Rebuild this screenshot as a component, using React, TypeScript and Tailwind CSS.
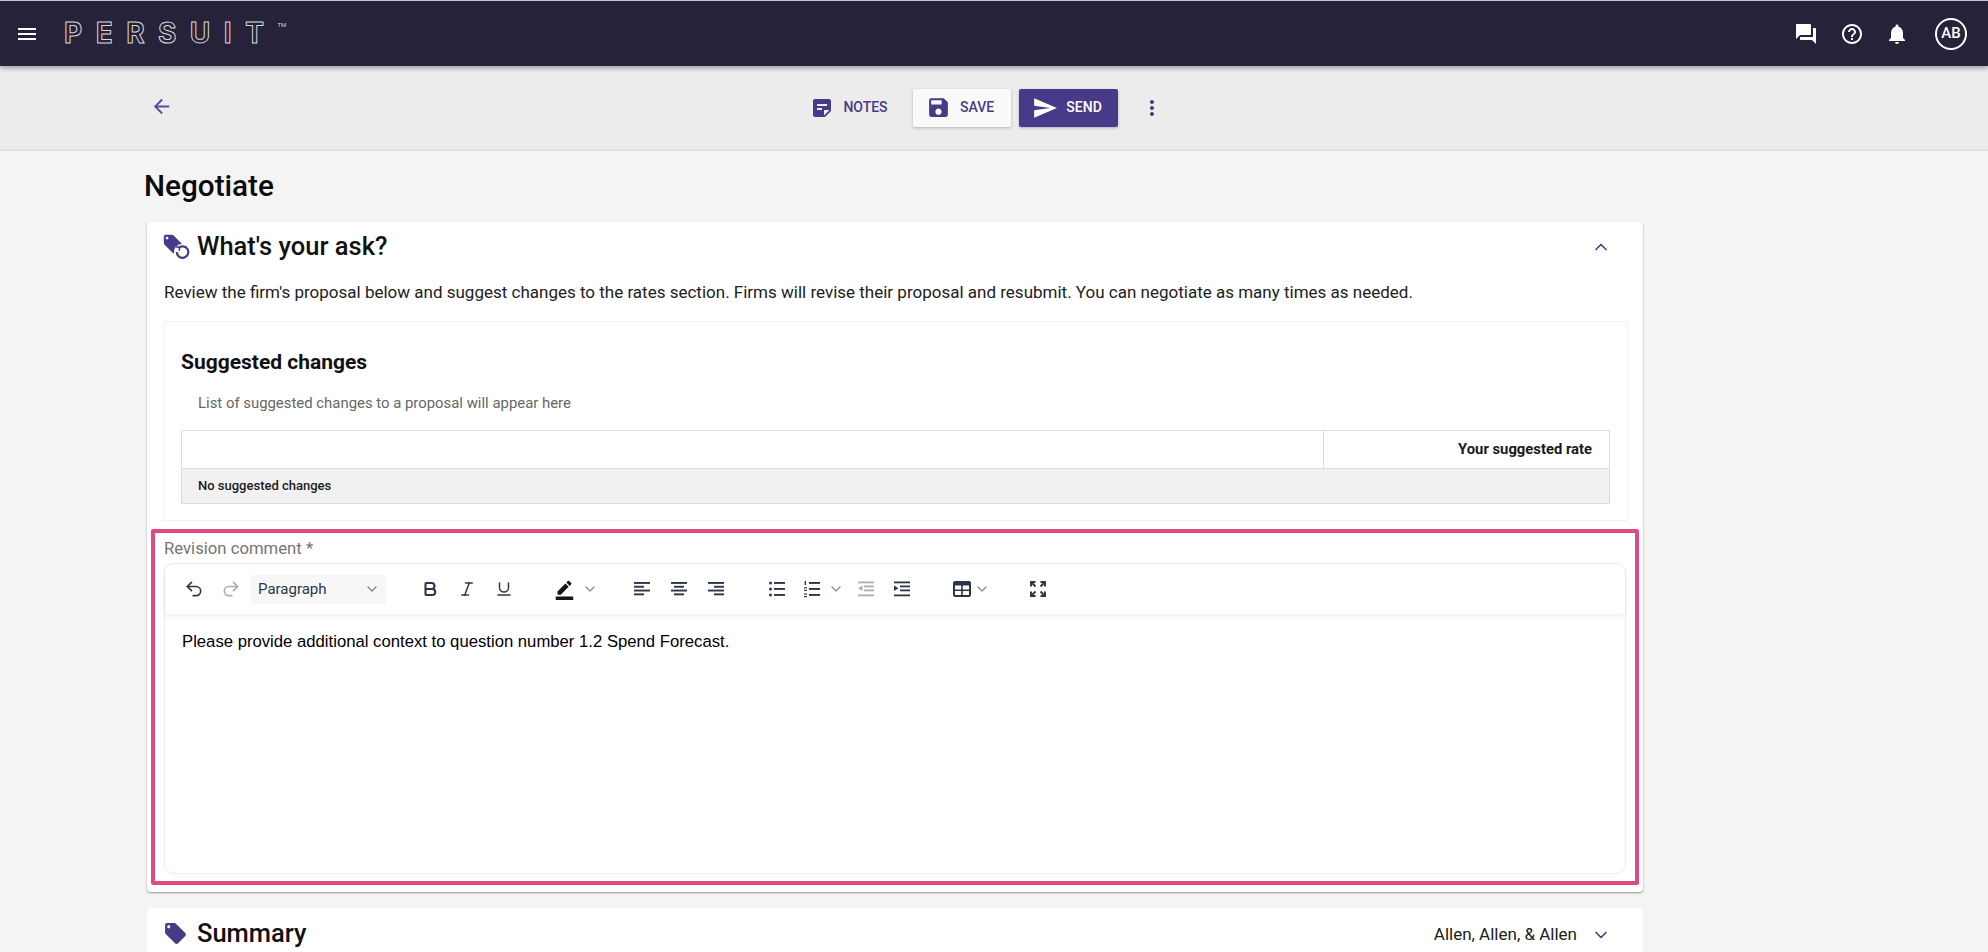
import { Bold, ChevronDown, ChevronUp, Italic, Redo2, Underline, Undo2 } from "lucide-react";
import {
  MdArrowBack,
  MdBorderColor,
  MdForum,
  MdHelpOutline,
  MdLocalOffer,
  MdMenu,
  MdMoreVert,
  MdNotifications,
  MdSave,
  MdSend,
  MdStickyNote2,
} from "react-icons/md";

const ROBOTO = "font-['Roboto',sans-serif]";

function Lines({ rows, className = "text-[#2d3648]" }: { rows: [number, number][]; className?: string }) {
  // toolbar glyph made of horizontal bars: [x1, x2] per row
  return (
    <svg viewBox="0 0 20 20" className={`h-[20px] w-[20px] ${className}`} fill="currentColor">
      {rows.map(([a, b], i) => (
        <rect key={i} x={a} y={3 + i * 3.8} width={b - a} height={1.9} />
      ))}
    </svg>
  );
}

function BulletList() {
  return (
    <svg viewBox="0 0 20 20" className="h-[20px] w-[20px] text-[#2d3648]" fill="currentColor">
      <circle cx="3.5" cy="4" r="1.5" />
      <circle cx="3.5" cy="10" r="1.5" />
      <circle cx="3.5" cy="16" r="1.5" />
      <rect x="7" y="3" width="11" height="1.9" />
      <rect x="7" y="9" width="11" height="1.9" />
      <rect x="7" y="15" width="11" height="1.9" />
    </svg>
  );
}

function NumberList() {
  return (
    <svg viewBox="0 0 20 20" className="h-[20px] w-[20px] text-[#2d3648]" fill="currentColor">
      <rect x="2.6" y="2" width="1.4" height="4" />
      <rect x="2" y="8.2" width="3" height="1.2" />
      <rect x="2" y="10.8" width="3" height="1.2" />
      <rect x="2" y="14.4" width="3" height="1.2" />
      <rect x="2" y="17" width="3" height="1.2" />
      <rect x="7" y="3" width="11" height="1.9" />
      <rect x="7" y="9" width="11" height="1.9" />
      <rect x="7" y="15" width="11" height="1.9" />
    </svg>
  );
}

function Indent({ out = false }: { out?: boolean }) {
  return (
    <svg
      viewBox="0 0 20 20"
      className={`h-[20px] w-[20px] ${out ? "text-[#a9adb5]" : "text-[#2d3648]"}`}
      fill="currentColor"
    >
      <rect x="2" y="2.5" width="16" height="1.8" />
      <rect x="8" y="6.5" width="10" height="1.8" />
      <rect x="8" y="10.5" width="10" height="1.8" />
      <rect x="2" y="15.5" width="16" height="1.8" />
      {out ? <path d="M2 9.3 6.5 6.5v5.6z" /> : <path d="M6.5 9.3 2 6.5v5.6z" />}
    </svg>
  );
}

function TableIcon() {
  return (
    <svg viewBox="0 0 20 20" className="h-[20px] w-[20px] text-[#2d3648]">
      <rect x="1" y="2" width="18" height="16" rx="2" fill="currentColor" />
      <rect x="3" y="6.5" width="6.2" height="4" fill="#fff" />
      <rect x="10.8" y="6.5" width="6.2" height="4" fill="#fff" />
      <rect x="3" y="12" width="6.2" height="4" fill="#fff" />
      <rect x="10.8" y="12" width="6.2" height="4" fill="#fff" />
    </svg>
  );
}

function Fullscreen() {
  return (
    <svg viewBox="0 0 20 20" className="h-[20px] w-[20px] text-[#2d3648]" fill="none" stroke="currentColor" strokeWidth="1.9">
      <path d="M3 7.5V3h4.5M3 3l4.5 4.5" />
      <path d="M17 7.5V3h-4.5M17 3l-4.5 4.5" />
      <path d="M3 12.5V17h4.5M3 17l4.5-4.5" />
      <path d="M17 12.5V17h-4.5M17 17l-4.5-4.5" />
    </svg>
  );
}

function AskIcon() {
  return (
    <div className="relative h-[26px] w-[26px] shrink-0">
      <MdLocalOffer className="absolute -left-[2px] -top-[1px] h-[22px] w-[22px] text-[#4a3a8a]" />
      <svg viewBox="0 0 14 14" className="absolute bottom-[0px] right-[0px] h-[16px] w-[16px] rounded-full bg-white text-[#4a3a8a]" fill="none" stroke="currentColor" strokeWidth="2">
        <path d="M4 3.5a5 5 0 1 1-1.5 3.5" />
        <path d="M1.5 2.5 5 3 4.5 6" strokeWidth="1.3" />
      </svg>
    </div>
  );
}

export default function App() {
  return (
    <div className={`flex h-[952px] w-full flex-col overflow-hidden bg-[#f4f4f4] ${ROBOTO}`}>
      {/* top bar */}
      <header className="z-20 flex h-[66px] shrink-0 items-center justify-between border-t border-[#c8c8c8] bg-[#25223a] pl-[15px] pr-[21px] text-white shadow-[0_2px_5px_rgba(0,0,0,0.35)]">
        <div className="flex items-center">
          <MdMenu className="h-[24px] w-[24px] text-white" />
          <span className="ml-[25px] text-[28px] font-bold leading-none tracking-[13.5px] text-transparent [-webkit-text-stroke:1px_#d6d6d6] font-['Inter',sans-serif] -translate-y-[1px]">
            PERSUIT
          </span>
          <span className="-translate-y-[9px] text-[6px] leading-none text-[#cfcfcf]">TM</span>
        </div>
        <div className="flex items-center">
          <MdForum className="h-[24px] w-[24px]" />
          <MdHelpOutline className="ml-[22px] h-[24px] w-[24px]" />
          <MdNotifications className="ml-[21px] h-[24px] w-[24px]" />
          <div className="ml-[26px] flex h-[32px] w-[32px] items-center justify-center rounded-full border-2 border-white text-[15px] font-medium">
            AB
          </div>
        </div>
      </header>

      {/* action bar */}
      <div className="relative flex h-[85px] shrink-0 items-center justify-center border-b-2 border-[#e2e2e2] bg-[#ececec] pr-[24px]">
        <MdArrowBack className="absolute left-[150px] top-[29px] h-[23px] w-[23px] text-[#5a4a9c]" />
        <div className="flex items-center">
          <button className="flex h-[38px] items-center gap-[9px] px-[10px] text-[14px] font-medium text-[#483a88]">
            <MdStickyNote2 className="h-[24px] w-[24px]" />
            NOTES
          </button>
          <button className="ml-[15px] flex h-[38px] w-[98px] items-center justify-center gap-[9px] rounded-[2px] bg-[#fafafa] pr-[3px] text-[14px] font-medium text-[#483a88] shadow-[0_1px_3px_rgba(0,0,0,0.25)]">
            <MdSave className="h-[25px] w-[25px]" />
            SAVE
          </button>
          <button className="ml-[8px] flex h-[38px] w-[99px] items-center justify-center gap-[8px] rounded-[2px] bg-[#483a88] pr-[2px] text-[14px] font-medium text-white shadow-[0_1px_3px_rgba(0,0,0,0.25)]">
            <MdSend className="h-[26px] w-[26px]" />
            SEND
          </button>
          <MdMoreVert className="ml-[22px] h-[24px] w-[24px] text-[#483a88]" />
        </div>
      </div>

      {/* page */}
      <main className="flex w-[1643px] flex-col pl-[144px]">
        <h1 className="mt-[18px] text-[29.7px] font-medium leading-[34px] text-[#0b0b0b]">Negotiate</h1>

        <section className="ml-[3px] mt-[19px] rounded-[4px] bg-white pb-[7px] shadow-[0_1px_2px_rgba(0,0,0,0.4)]">
          <div className="flex h-[50px] items-center justify-between pl-[17px] pr-[32px]">
            <div className="flex items-center gap-[7px]">
              <AskIcon />
              <h2 className="text-[25.5px] font-medium leading-none text-[#111]">What's your ask?</h2>
            </div>
            <ChevronUp className="h-[20px] w-[20px] text-[#483a88]" />
          </div>

          <p className="mt-[8px] pl-[17px] text-[17px] leading-[24px] text-[#212121]">
            Review the firm's proposal below and suggest changes to the rates section. Firms will revise their proposal and resubmit. You can negotiate as many times as needed.
          </p>

          <div className="ml-[16px] mr-[15px] mt-[17px] h-[200px] border border-[#f2f2f2] px-[17px]">
            <h3 className="mt-[25px] text-[21px] font-bold leading-[30px] text-[#111]">Suggested changes</h3>
            <p className="mt-[14px] pl-[17px] text-[14.9px] leading-[24px] text-[#666]">
              List of suggested changes to a proposal will appear here
            </p>
            <div className="mt-[15px] border border-[#dcdcdc] text-[#1b1b1b]">
              <div className="flex h-[38px] border-b border-[#dcdcdc]">
                <div className="flex-1" />
                <div className="flex w-[286px] items-center justify-end border-l border-[#dcdcdc] pr-[17px] text-[14.8px] font-bold">
                  Your suggested rate
                </div>
              </div>
              <div className="flex h-[34px] items-center bg-[#f1f1f1] pl-[16px] text-[13px] font-medium">
                No suggested changes
              </div>
            </div>
          </div>

          {/* highlighted comment */}
          <div className="mx-[4px] mt-[8px] h-[356px] rounded-[2px] border-[4px] border-[#df4a84] px-[9px]">
            <div className="pt-[2px] text-[16.7px] leading-[28px] text-[#757575]">Revision comment *</div>
            <div className="h-[311px] rounded-[10px] border border-[#eeeeee] shadow-[0_0_2px_rgba(0,0,0,0.05)]">
              <div className="flex h-[50px] items-center pl-[19px] text-[#2d3648] shadow-[0_3px_5px_rgba(0,0,0,0.06)]">
                <Undo2 className="h-[20px] w-[20px]" strokeWidth={2} />
                <Redo2 className="ml-[17px] h-[20px] w-[20px] text-[#a9adb5]" strokeWidth={2} />
                <div className="ml-[9px] flex h-[29px] w-[136px] items-center justify-between rounded-[3px] bg-[#f7f7f7] pl-[8px] pr-[6px] text-[15px] text-[#2d3648]">
                  Paragraph
                  <ChevronDown className="h-[16px] w-[16px] text-[#7f8590]" />
                </div>
                <Bold className="ml-[35px] h-[18px] w-[18px]" strokeWidth={2.8} />
                <Italic className="ml-[19px] h-[18px] w-[18px]" strokeWidth={2} />
                <Underline className="ml-[19px] h-[18px] w-[18px]" strokeWidth={2} />
                <MdBorderColor className="ml-[41px] h-[21px] w-[21px] text-[#15171c]" />
                <ChevronDown className="ml-[7px] h-[16px] w-[16px] text-[#8a8f99]" />
                <div className="ml-[34px] flex items-center gap-[17px]">
                  <Lines rows={[[2, 18], [2, 12], [2, 18], [2, 12]]} />
                  <Lines rows={[[2, 18], [5, 15], [2, 18], [5, 15]]} />
                  <Lines rows={[[2, 18], [8, 18], [2, 18], [8, 18]]} />
                </div>
                <div className="ml-[41px] flex items-center">
                  <BulletList />
                  <div className="ml-[15px]"><NumberList /></div>
                  <ChevronDown className="ml-[6px] h-[16px] w-[16px] text-[#8a8f99]" />
                  <div className="ml-[12px]"><Indent out /></div>
                  <div className="ml-[16px]"><Indent /></div>
                </div>
                <div className="ml-[40px]"><TableIcon /></div>
                <ChevronDown className="ml-[2px] h-[16px] w-[16px] text-[#8a8f99]" />
                <div className="ml-[38px]"><Fullscreen /></div>
              </div>
              <p className="mt-[16px] pl-[17px] font-['Liberation_Sans',sans-serif] text-[16.7px] leading-[24px] text-black">
                Please provide additional context to question number 1.2 Spend Forecast.
              </p>
            </div>
          </div>
        </section>

        <section className="ml-[3px] mt-[16px] flex h-[60px] items-start justify-between rounded-[4px] bg-white pl-[16px] pr-[32px] pt-[10px]">
          <div className="flex items-center gap-[9px]">
            <MdLocalOffer className="h-[25px] w-[25px] text-[#483a88]" />
            <h2 className="text-[25.5px] font-medium leading-[30px] text-[#111]">Summary</h2>
          </div>
          <div className="flex items-center gap-[14px] pt-[4px] text-[17px] text-[#212121]">
            Allen, Allen, &amp; Allen
            <ChevronDown className="h-[20px] w-[20px] text-[#483a88]" />
          </div>
        </section>
      </main>
    </div>
  );
}
